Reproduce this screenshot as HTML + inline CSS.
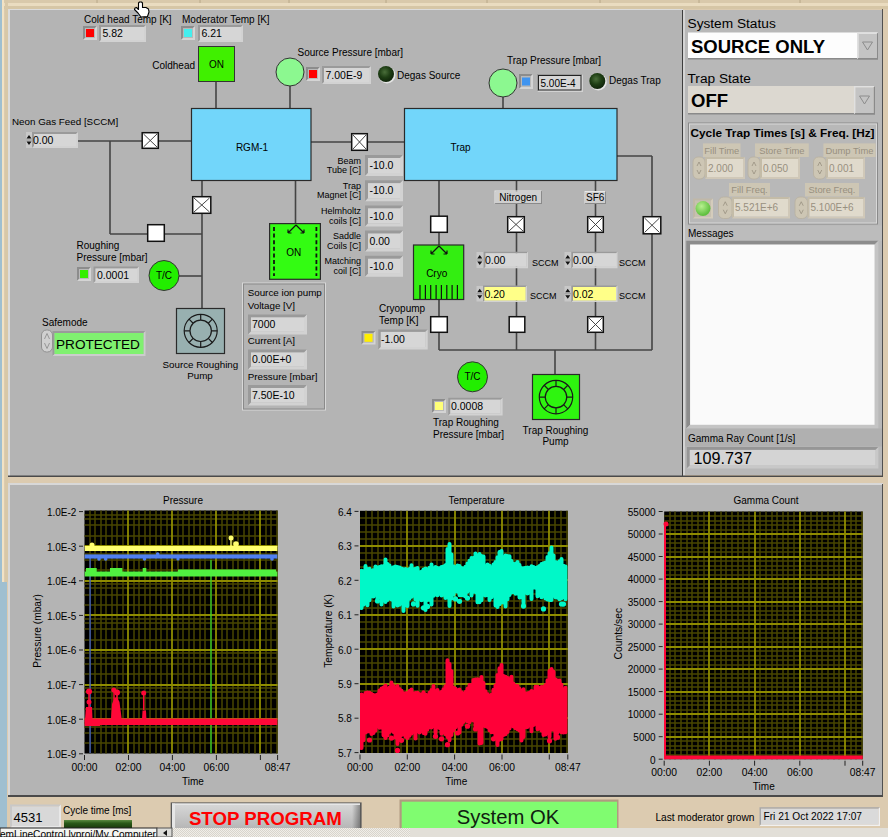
<!DOCTYPE html><html><head><meta charset="utf-8"><style>html,body{margin:0;padding:0;width:888px;height:837px;overflow:hidden;background:#dccbb0}</style></head><body><svg width="888" height="837" viewBox="0 0 888 837" font-family='"Liberation Sans", sans-serif' style="position:absolute;left:0;top:0">
<defs><radialGradient id="dl" cx="0.42" cy="0.38" r="0.62"><stop offset="0" stop-color="#4a6e3a"/><stop offset="0.55" stop-color="#1e3e14"/><stop offset="1" stop-color="#10240a"/></radialGradient></defs>
<rect x="0.0" y="0.0" width="888.0" height="837.0" fill="#dccbb0" />
<rect x="0.0" y="0.0" width="888.0" height="3.0" fill="#d9c9ab" />
<rect x="0.0" y="3.0" width="888.0" height="3.0" fill="#eadcc0" />
<rect x="0.0" y="6.0" width="888.0" height="3.0" fill="#d6c6a6" />
<line x1="97.0" y1="0.0" x2="97.0" y2="3.0" stroke="#b8a888" stroke-width="1"/>
<line x1="200.0" y1="0.0" x2="200.0" y2="3.0" stroke="#b8a888" stroke-width="1"/>
<line x1="289.0" y1="0.0" x2="289.0" y2="3.0" stroke="#b8a888" stroke-width="1"/>
<line x1="386.0" y1="0.0" x2="386.0" y2="3.0" stroke="#b8a888" stroke-width="1"/>
<line x1="487.0" y1="0.0" x2="487.0" y2="3.0" stroke="#b8a888" stroke-width="1"/>
<line x1="600.0" y1="0.0" x2="600.0" y2="3.0" stroke="#b8a888" stroke-width="1"/>
<line x1="699.0" y1="0.0" x2="699.0" y2="3.0" stroke="#b8a888" stroke-width="1"/>
<line x1="800.0" y1="0.0" x2="800.0" y2="3.0" stroke="#b8a888" stroke-width="1"/>
<rect x="0.0" y="0.0" width="2.0" height="582.0" fill="#9fbfd0" />
<rect x="0.0" y="582.0" width="7.0" height="246.0" fill="#9fbfd0" />
<rect x="2.0" y="0.0" width="2.0" height="582.0" fill="#f2e2c4" />
<rect x="5.0" y="0.0" width="3.0" height="582.0" fill="#d8c8a8" />
<rect x="8.0" y="9.0" width="675.0" height="1.0" fill="#dcdcdc" />
<rect x="8.0" y="9.0" width="2.0" height="467.0" fill="#dcdcdc" />
<rect x="10.0" y="10.0" width="672.0" height="466.0" fill="#b4b4b4" />
<rect x="682.0" y="10.0" width="1.0" height="466.0" fill="#3e3e3e" />
<rect x="683.0" y="10.0" width="2.0" height="466.0" fill="#d4d4d4" />
<rect x="685.0" y="10.0" width="197.0" height="465.0" fill="#b8b8b8" />
<rect x="882.0" y="9.0" width="1.0" height="468.0" fill="#505050" />
<rect x="8.0" y="475.5" width="875.0" height="1.5" fill="#4a4a4a" />
<rect x="8.0" y="483.0" width="875.0" height="2.0" fill="#d8d8d8" />
<rect x="8.0" y="483.0" width="2.0" height="314.0" fill="#d8d8d8" />
<rect x="10.0" y="485.0" width="872.0" height="310.0" fill="#b4b4b4" />
<rect x="882.0" y="484.0" width="1.0" height="313.0" fill="#505050" />
<rect x="8.0" y="795.0" width="875.0" height="2.0" fill="#4a4a4a" />
<text x="84.0" y="22.6" font-size="10" text-anchor="start" font-weight="400" fill="#000" >Cold head Temp [K]</text>
<polygon points="83,26 97,26 95,28 85,28 85,38 83,40" fill="#8c8c8c"/>
<polygon points="97,26 97,40 83,40 85,38 95,38 95,28" fill="#d4d4d4"/>
<rect x="85.0" y="28.0" width="10.0" height="10.0" fill="#b8b8b8" />
<rect x="86.0" y="29.0" width="8.0" height="8.0" fill="#ff0000" />
<polygon points="99,25 146,25 144,27 101,27 101,40 99,42" fill="#9a9a9a"/>
<polygon points="146,25 146,42 99,42 101,40 144,40 144,27" fill="#d2d2d2"/>
<rect x="101.0" y="27.0" width="43.0" height="13.0" fill="#d6d6d6" />
<text x="102.5" y="37.2" font-size="10.5" text-anchor="start" font-weight="400" fill="#000" >5.82</text>
<text x="182.0" y="22.6" font-size="10" text-anchor="start" font-weight="400" fill="#000" >Moderator Temp [K]</text>
<polygon points="181,26 195,26 193,28 183,28 183,38 181,40" fill="#8c8c8c"/>
<polygon points="195,26 195,40 181,40 183,38 193,38 193,28" fill="#d4d4d4"/>
<rect x="183.0" y="28.0" width="10.0" height="10.0" fill="#b8b8b8" />
<rect x="184.0" y="29.0" width="8.0" height="8.0" fill="#44eeee" />
<polygon points="198,25 243,25 241,27 200,27 200,40 198,42" fill="#9a9a9a"/>
<polygon points="243,25 243,42 198,42 200,40 241,40 241,27" fill="#d2d2d2"/>
<rect x="200.0" y="27.0" width="41.0" height="13.0" fill="#d6d6d6" />
<text x="201.5" y="37.2" font-size="10.5" text-anchor="start" font-weight="400" fill="#000" >6.21</text>
<text x="195.0" y="68.5" font-size="10" text-anchor="end" font-weight="400" fill="#000" >Coldhead</text>
<line x1="216.0" y1="82.0" x2="216.0" y2="108.0" stroke="#444444" stroke-width="1.6"/>
<line x1="290.0" y1="86.0" x2="290.0" y2="108.0" stroke="#444444" stroke-width="1.6"/>
<line x1="503.0" y1="97.0" x2="503.0" y2="108.0" stroke="#444444" stroke-width="1.6"/>
<line x1="78.0" y1="141.0" x2="191.0" y2="141.0" stroke="#444444" stroke-width="1.6"/>
<line x1="110.0" y1="141.0" x2="110.0" y2="234.0" stroke="#444444" stroke-width="1.6"/>
<line x1="110.0" y1="234.0" x2="202.0" y2="234.0" stroke="#444444" stroke-width="1.6"/>
<line x1="202.0" y1="181.0" x2="202.0" y2="308.0" stroke="#444444" stroke-width="1.6"/>
<line x1="179.0" y1="276.0" x2="202.0" y2="276.0" stroke="#444444" stroke-width="1.6"/>
<line x1="295.5" y1="181.0" x2="295.5" y2="224.0" stroke="#444444" stroke-width="1.6"/>
<line x1="311.0" y1="142.0" x2="404.5" y2="142.0" stroke="#444444" stroke-width="1.6"/>
<line x1="439.0" y1="181.0" x2="439.0" y2="350.0" stroke="#444444" stroke-width="1.6"/>
<line x1="516.5" y1="181.0" x2="516.5" y2="350.0" stroke="#444444" stroke-width="1.6"/>
<line x1="595.5" y1="181.0" x2="595.5" y2="350.0" stroke="#444444" stroke-width="1.6"/>
<line x1="617.0" y1="156.0" x2="652.0" y2="156.0" stroke="#444444" stroke-width="1.6"/>
<line x1="652.0" y1="156.0" x2="652.0" y2="350.0" stroke="#444444" stroke-width="1.6"/>
<line x1="439.0" y1="350.0" x2="652.0" y2="350.0" stroke="#444444" stroke-width="1.6"/>
<line x1="555.0" y1="350.0" x2="555.0" y2="374.0" stroke="#444444" stroke-width="1.6"/>
<rect x="198.5" y="46.5" width="36.0" height="35.0" fill="#40f000" stroke="#333" stroke-width="1" />
<text x="216.5" y="67.5" font-size="10" text-anchor="middle" font-weight="400" fill="#000" >ON</text>
<text x="297.5" y="55.5" font-size="10" text-anchor="start" font-weight="400" fill="#000" >Source Pressure [mbar]</text>
<circle cx="290" cy="72" r="14" fill="#8cf890" stroke="#333" stroke-width="1"/>
<polygon points="306,67 320,67 318,69 308,69 308,79 306,81" fill="#8c8c8c"/>
<polygon points="320,67 320,81 306,81 308,79 318,79 318,69" fill="#d4d4d4"/>
<rect x="308.0" y="69.0" width="10.0" height="10.0" fill="#b8b8b8" />
<rect x="309.0" y="70.0" width="8.0" height="8.0" fill="#ff0000" />
<polygon points="322,66 371,66 369,68 324,68 324,82 322,84" fill="#9a9a9a"/>
<polygon points="371,66 371,84 322,84 324,82 369,82 369,68" fill="#d2d2d2"/>
<rect x="324.0" y="68.0" width="45.0" height="14.0" fill="#d6d6d6" />
<text x="325.5" y="78.7" font-size="10.5" text-anchor="start" font-weight="400" fill="#000" >7.00E-9</text>
<circle cx="387" cy="75" r="8.5" fill="#e4e4e4"/>
<circle cx="386" cy="74" r="8" fill="url(#dl)"/>
<text x="397.0" y="78.5" font-size="10" text-anchor="start" font-weight="400" fill="#000" >Degas Source</text>
<rect x="191.5" y="108.5" width="119.5" height="72.0" fill="#72d6fa" stroke="#2a2a2a" stroke-width="1.2" />
<text x="252.0" y="150.6" font-size="10" text-anchor="middle" font-weight="400" fill="#000" >RGM-1</text>
<rect x="404.5" y="108.5" width="212.5" height="72.0" fill="#72d6fa" stroke="#2a2a2a" stroke-width="1.2" />
<text x="460.5" y="150.6" font-size="10" text-anchor="middle" font-weight="400" fill="#000" >Trap</text>
<text x="507.0" y="63.5" font-size="10" text-anchor="start" font-weight="400" fill="#000" >Trap Pressure [mbar]</text>
<circle cx="503" cy="83" r="14" fill="#8cf890" stroke="#333" stroke-width="1"/>
<polygon points="519,74 533,74 531,76 521,76 521,87 519,89" fill="#8c8c8c"/>
<polygon points="533,74 533,89 519,89 521,87 531,87 531,76" fill="#d4d4d4"/>
<rect x="521.0" y="76.0" width="10.0" height="11.0" fill="#b8b8b8" />
<rect x="522.0" y="77.5" width="8.0" height="8.0" fill="#3f94f0" />
<polygon points="537,74 583,74 581,76 539,76 539,90 537,92" fill="#9a9a9a"/>
<polygon points="583,74 583,92 537,92 539,90 581,90 581,76" fill="#d2d2d2"/>
<rect x="539.0" y="76.0" width="42.0" height="14.0" fill="#d6d6d6" />
<text x="540.5" y="86.5" font-size="10" text-anchor="start" font-weight="400" fill="#000" >5.00E-4</text>
<rect x="538.5" y="75.5" width="42.5" height="14.5" fill="none" stroke="#222" stroke-width="1" />
<circle cx="598.3" cy="82" r="8.5" fill="#e4e4e4"/>
<circle cx="597.3" cy="81" r="8" fill="url(#dl)"/>
<text x="609.0" y="83.5" font-size="10" text-anchor="start" font-weight="400" fill="#000" >Degas Trap</text>
<text x="12.0" y="124.5" font-size="9.8" text-anchor="start" font-weight="400" fill="#000" >Neon Gas Feed [SCCM]</text>
<rect x="26.0" y="132.0" width="6.0" height="16.0" fill="#c8c8c8" />
<path d="M26.5,138.5 L29.0,135.0 L31.5,138.5 Z M26.5,141.5 L29.0,145.0 L31.5,141.5 Z" fill="#111"/>
<line x1="26.0" y1="140.0" x2="32.0" y2="140.0" stroke="#888" stroke-width="0.8"/>
<polygon points="32,132 78,132 76,134 34,134 34,146 32,148" fill="#9a9a9a"/>
<polygon points="78,132 78,148 32,148 34,146 76,146 76,134" fill="#d2d2d2"/>
<rect x="34.0" y="134.0" width="42.0" height="12.0" fill="#d6d6d6" />
<text x="33.0" y="143.7" font-size="10.5" text-anchor="start" font-weight="400" fill="#000" >0.00</text>
<rect x="142.2" y="132.7" width="16.1" height="15.6" fill="#ffffff" stroke="#111" stroke-width="1.5" />
<path d="M143.5,134 L157,147 M157,134 L143.5,147" stroke="#333" stroke-width="0.9"/>
<rect x="192.7" y="196.7" width="18.1" height="16.6" fill="#ffffff" stroke="#111" stroke-width="1.5" />
<path d="M194,198 L209.5,212 M209.5,198 L194,212" stroke="#333" stroke-width="0.9"/>
<rect x="147.7" y="224.7" width="16.6" height="16.6" fill="#ffffff" stroke="#111" stroke-width="1.5" />
<circle cx="164" cy="275.5" r="15" fill="#22ee00" stroke="#333" stroke-width="1"/>
<text x="164.0" y="279.1" font-size="10" text-anchor="middle" font-weight="400" fill="#000" >T/C</text>
<text x="76.5" y="248.6" font-size="10" text-anchor="start" font-weight="400" fill="#000" >Roughing</text>
<text x="76.5" y="260.6" font-size="10" text-anchor="start" font-weight="400" fill="#000" >Pressure [mbar]</text>
<polygon points="77,267 91,267 89,269 79,269 79,279 77,281" fill="#8c8c8c"/>
<polygon points="91,267 91,281 77,281 79,279 89,279 89,269" fill="#d4d4d4"/>
<rect x="79.0" y="269.0" width="10.0" height="10.0" fill="#b8b8b8" />
<rect x="80.0" y="270.0" width="8.0" height="8.0" fill="#33ee00" />
<polygon points="93.5,266.5 139,266.5 137,268.5 95.5,268.5 95.5,281 93.5,283" fill="#9a9a9a"/>
<polygon points="139,266.5 139,283 93.5,283 95.5,281 137,281 137,268.5" fill="#d2d2d2"/>
<rect x="95.5" y="268.5" width="41.5" height="12.5" fill="#d6d6d6" />
<text x="97.0" y="278.5" font-size="10.5" text-anchor="start" font-weight="400" fill="#000" >0.0001</text>
<text x="42.0" y="325.6" font-size="10" text-anchor="start" font-weight="400" fill="#000" >Safemode</text>
<rect x="41.5" y="330" width="11" height="22" rx="5" fill="#d0d0d0" stroke="#909090" stroke-width="1"/>
<path d="M44.5,339 L47,333.5 L49.5,339 M44.5,343 L47,348.5 L49.5,343" stroke="#888" stroke-width="0.8" fill="none"/>
<polygon points="52.5,331 145.5,331 143.5,333 54.5,333 54.5,354 52.5,356" fill="#9a9a9a"/>
<polygon points="145.5,331 145.5,356 52.5,356 54.5,354 143.5,354 143.5,333" fill="#cccccc"/>
<rect x="54.5" y="333.0" width="89.0" height="21.0" fill="#80f070" />
<text x="56.0" y="349.3" font-size="13.6" text-anchor="start" font-weight="400" fill="#000" >PROTECTED</text>
<rect x="176.5" y="308.5" width="48.0" height="45.0" fill="#98b0b0" stroke="#2a2a2a" stroke-width="1.2" />
<circle cx="200.7" cy="330.8" r="16.5" fill="none" stroke="#1a1a1a" stroke-width="1.2"/>
<circle cx="200.7" cy="330.8" r="10.7" fill="none" stroke="#1a1a1a" stroke-width="1.2"/>
<path d="M211.40,330.80 L217.20,330.80 M208.27,338.37 L212.37,342.47 M200.70,341.50 L200.70,347.30 M193.13,338.37 L189.03,342.47 M190.00,330.80 L184.20,330.80 M193.13,323.23 L189.03,319.13 M200.70,320.10 L200.70,314.30 M208.27,323.23 L212.37,319.13 " stroke="#1a1a1a" stroke-width="1.2"/>
<text x="200.4" y="367.8" font-size="9.8" text-anchor="middle" font-weight="400" fill="#000" >Source Roughing</text>
<text x="200.0" y="379.3" font-size="9.8" text-anchor="middle" font-weight="400" fill="#000" >Pump</text>
<rect x="351.7" y="133.7" width="15.6" height="16.6" fill="#ffffff" stroke="#111" stroke-width="1.5" />
<path d="M353,135 L366,149 M366,135 L353,149" stroke="#333" stroke-width="0.9"/>
<text x="361.0" y="163.6" font-size="9" text-anchor="end" font-weight="400" fill="#000" >Beam</text>
<text x="361.0" y="173.2" font-size="9" text-anchor="end" font-weight="400" fill="#000" >Tube [C]</text>
<polygon points="365,155.0 403,155.0 400,158.0 368,158.0 368,173.0 365,176.0" fill="#9a9a9a"/>
<polygon points="403,155.0 403,176.0 365,176.0 368,173.0 400,173.0 400,158.0" fill="#d2d2d2"/>
<rect x="368.0" y="158.0" width="32.0" height="15.0" fill="#d6d6d6" />
<text x="369.5" y="169.2" font-size="10.5" text-anchor="start" font-weight="400" fill="#000" >-10.0</text>
<text x="361.0" y="188.8" font-size="9" text-anchor="end" font-weight="400" fill="#000" >Trap</text>
<text x="361.0" y="198.4" font-size="9" text-anchor="end" font-weight="400" fill="#000" >Magnet [C]</text>
<polygon points="365,180.2 403,180.2 400,183.2 368,183.2 368,198.2 365,201.2" fill="#9a9a9a"/>
<polygon points="403,180.2 403,201.2 365,201.2 368,198.2 400,198.2 400,183.2" fill="#d2d2d2"/>
<rect x="368.0" y="183.2" width="32.0" height="15.0" fill="#d6d6d6" />
<text x="369.5" y="194.4" font-size="10.5" text-anchor="start" font-weight="400" fill="#000" >-10.0</text>
<text x="361.0" y="214.0" font-size="9" text-anchor="end" font-weight="400" fill="#000" >Helmholtz</text>
<text x="361.0" y="223.6" font-size="9" text-anchor="end" font-weight="400" fill="#000" >coils [C]</text>
<polygon points="365,205.4 403,205.4 400,208.4 368,208.4 368,223.4 365,226.4" fill="#9a9a9a"/>
<polygon points="403,205.4 403,226.4 365,226.4 368,223.4 400,223.4 400,208.4" fill="#d2d2d2"/>
<rect x="368.0" y="208.4" width="32.0" height="15.0" fill="#d6d6d6" />
<text x="369.5" y="219.6" font-size="10.5" text-anchor="start" font-weight="400" fill="#000" >-10.0</text>
<text x="361.0" y="239.2" font-size="9" text-anchor="end" font-weight="400" fill="#000" >Saddle</text>
<text x="361.0" y="248.8" font-size="9" text-anchor="end" font-weight="400" fill="#000" >Coils [C]</text>
<polygon points="365,230.6 403,230.6 400,233.6 368,233.6 368,248.6 365,251.6" fill="#9a9a9a"/>
<polygon points="403,230.6 403,251.6 365,251.6 368,248.6 400,248.6 400,233.6" fill="#d2d2d2"/>
<rect x="368.0" y="233.6" width="32.0" height="15.0" fill="#d6d6d6" />
<text x="369.5" y="244.8" font-size="10.5" text-anchor="start" font-weight="400" fill="#000" >0.00</text>
<text x="361.0" y="264.4" font-size="9" text-anchor="end" font-weight="400" fill="#000" >Matching</text>
<text x="361.0" y="274.0" font-size="9" text-anchor="end" font-weight="400" fill="#000" >coil [C]</text>
<polygon points="365,255.8 403,255.8 400,258.8 368,258.8 368,273.8 365,276.8" fill="#9a9a9a"/>
<polygon points="403,255.8 403,276.8 365,276.8 368,273.8 400,273.8 400,258.8" fill="#d2d2d2"/>
<rect x="368.0" y="258.8" width="32.0" height="15.0" fill="#d6d6d6" />
<text x="369.5" y="270.0" font-size="10.5" text-anchor="start" font-weight="400" fill="#000" >-10.0</text>
<rect x="269.6" y="223.6" width="50.8" height="55.7" fill="#33fc12" stroke="#2a2a2a" stroke-width="1.2" />
<path d="M274,227 L274,276 M316.4,227 L316.4,276" stroke="#111" stroke-width="1.8" stroke-dasharray="4,2.6"/>
<path d="M296,225 L288,233 M296,225 L304,233 M288,233 L288,229.5 M288,233 L291.5,233 M304,233 L304,229.5 M304,233 L300.5,233" stroke="#111" stroke-width="1.2" fill="none"/>
<text x="293.7" y="255.6" font-size="10" text-anchor="middle" font-weight="400" fill="#000" >ON</text>
<rect x="242.5" y="283" width="83" height="127" fill="none" stroke="#d8d8d8" stroke-width="1"/>
<rect x="243.5" y="284" width="81" height="125" fill="none" stroke="#8a8a8a" stroke-width="1"/>
<text x="247.7" y="295.5" font-size="9.8" text-anchor="start" font-weight="400" fill="#000" >Source ion pump</text>
<text x="247.7" y="308.5" font-size="9.8" text-anchor="start" font-weight="400" fill="#000" >Voltage [V]</text>
<polygon points="248,314.4 307,314.4 304,317.4 251,317.4 251,331.6 248,334.6" fill="#9a9a9a"/>
<polygon points="307,314.4 307,334.6 248,334.6 251,331.6 304,331.6 304,317.4" fill="#d2d2d2"/>
<rect x="251.0" y="317.4" width="53.0" height="14.2" fill="#d6d6d6" />
<text x="252.0" y="328.2" font-size="10.5" text-anchor="start" font-weight="400" fill="#000" >7000</text>
<text x="247.7" y="344.0" font-size="9.8" text-anchor="start" font-weight="400" fill="#000" >Current [A]</text>
<polygon points="248,349.5 307,349.5 304,352.5 251,352.5 251,366.5 248,369.5" fill="#9a9a9a"/>
<polygon points="307,349.5 307,369.5 248,369.5 251,366.5 304,366.5 304,352.5" fill="#d2d2d2"/>
<rect x="251.0" y="352.5" width="53.0" height="14.0" fill="#d6d6d6" />
<text x="252.0" y="363.2" font-size="10.5" text-anchor="start" font-weight="400" fill="#000" >0.00E+0</text>
<text x="247.7" y="379.5" font-size="9.8" text-anchor="start" font-weight="400" fill="#000" >Pressure [mbar]</text>
<polygon points="248,385 307,385 304,388 251,388 251,402.5 248,405.5" fill="#9a9a9a"/>
<polygon points="307,385 307,405.5 248,405.5 251,402.5 304,402.5 304,388" fill="#d2d2d2"/>
<rect x="251.0" y="388.0" width="53.0" height="14.5" fill="#d6d6d6" />
<text x="252.0" y="399.0" font-size="10.5" text-anchor="start" font-weight="400" fill="#000" >7.50E-10</text>
<polygon points="494.5,190.5 542,190.5 541,191.5 495.5,191.5 495.5,203 494.5,204" fill="#e8e8e8"/>
<polygon points="542,190.5 542,204 494.5,204 495.5,203 541,203 541,191.5" fill="#8a8a8a"/>
<rect x="495.5" y="191.5" width="45.5" height="11.5" fill="#cfcfcf" />
<text x="518.2" y="200.8" font-size="10" text-anchor="middle" font-weight="400" fill="#000" >Nitrogen</text>
<polygon points="584.5,191 606,191 605,192 585.5,192 585.5,203 584.5,204" fill="#e8e8e8"/>
<polygon points="606,191 606,204 584.5,204 585.5,203 605,203 605,192" fill="#8a8a8a"/>
<rect x="585.5" y="192.0" width="19.5" height="11.0" fill="#cfcfcf" />
<text x="595.2" y="201.1" font-size="10" text-anchor="middle" font-weight="400" fill="#000" >SF6</text>
<rect x="430.7" y="216.2" width="16.6" height="16.1" fill="#ffffff" stroke="#111" stroke-width="1.5" />
<rect x="413.5" y="245.0" width="50.2" height="54.5" fill="#33ee11" stroke="#2a2a2a" stroke-width="1.2" />
<path d="M439,246 L431,254 M439,246 L447,254 M431,254 L431,250.5 M431,254 L434.5,254 M447,254 L447,250.5 M447,254 L443.5,254" stroke="#111" stroke-width="1.2" fill="none"/>
<text x="436.7" y="276.9" font-size="10" text-anchor="middle" font-weight="400" fill="#000" >Cryo</text>
<path d="M420.0,285 L420.0,299 M425.4,285 L425.4,299 M430.7,285 L430.7,299 M436.1,285 L436.1,299 M441.4,285 L441.4,299 M446.8,285 L446.8,299 M452.1,285 L452.1,299 M457.4,285 L457.4,299 " stroke="#111" stroke-width="1.2"/>
<rect x="430.7" y="316.7" width="16.6" height="15.6" fill="#ffffff" stroke="#111" stroke-width="1.5" />
<rect x="507.7" y="216.7" width="16.6" height="15.6" fill="#ffffff" stroke="#111" stroke-width="1.5" />
<path d="M509,218 L523,231 M523,218 L509,231" stroke="#333" stroke-width="0.9"/>
<rect x="476.5" y="252.0" width="6.5" height="16.0" fill="#c8c8c8" />
<path d="M477.25,258.5 L479.75,255.0 L482.25,258.5 Z M477.25,261.5 L479.75,265.0 L482.25,261.5 Z" fill="#111"/>
<line x1="476.5" y1="260.0" x2="483.0" y2="260.0" stroke="#888" stroke-width="0.8"/>
<polygon points="484,251.7 528,251.7 526.5,253.2 485.5,253.2 485.5,266.8 484,268.3" fill="#9a9a9a"/>
<polygon points="528,251.7 528,268.3 484,268.3 485.5,266.8 526.5,266.8 526.5,253.2" fill="#d2d2d2"/>
<rect x="485.5" y="253.2" width="41.0" height="13.6" fill="#d6d6d6" />
<text x="485.0" y="263.7" font-size="10.5" text-anchor="start" font-weight="400" fill="#000" >0.00</text>
<text x="532.0" y="265.8" font-size="9" text-anchor="start" font-weight="400" fill="#000" >SCCM</text>
<rect x="476.5" y="286.0" width="6.5" height="15.5" fill="#c8c8c8" />
<path d="M477.25,292.25 L479.75,288.75 L482.25,292.25 Z M477.25,295.25 L479.75,298.75 L482.25,295.25 Z" fill="#111"/>
<line x1="476.5" y1="293.8" x2="483.0" y2="293.8" stroke="#888" stroke-width="0.8"/>
<polygon points="483,285.5 527,285.5 525.5,287.0 484.5,287.0 484.5,300.5 483,302" fill="#9a9a9a"/>
<polygon points="527,285.5 527,302 483,302 484.5,300.5 525.5,300.5 525.5,287.0" fill="#d2d2d2"/>
<rect x="484.5" y="287.0" width="41.0" height="13.5" fill="#ffff88" />
<text x="484.5" y="297.5" font-size="10.5" text-anchor="start" font-weight="400" fill="#000" >0.20</text>
<text x="530.0" y="298.9" font-size="9" text-anchor="start" font-weight="400" fill="#000" >SCCM</text>
<rect x="509.2" y="316.7" width="15.6" height="15.6" fill="#ffffff" stroke="#111" stroke-width="1.5" />
<rect x="587.7" y="216.7" width="15.6" height="15.6" fill="#ffffff" stroke="#111" stroke-width="1.5" />
<path d="M589,218 L602,231 M602,218 L589,231" stroke="#333" stroke-width="0.9"/>
<rect x="564.5" y="252.0" width="6.5" height="16.0" fill="#c8c8c8" />
<path d="M565.25,258.5 L567.75,255.0 L570.25,258.5 Z M565.25,261.5 L567.75,265.0 L570.25,261.5 Z" fill="#111"/>
<line x1="564.5" y1="260.0" x2="571.0" y2="260.0" stroke="#888" stroke-width="0.8"/>
<polygon points="571.5,251.7 617.5,251.7 616.0,253.2 573.0,253.2 573.0,266.8 571.5,268.3" fill="#9a9a9a"/>
<polygon points="617.5,251.7 617.5,268.3 571.5,268.3 573.0,266.8 616.0,266.8 616.0,253.2" fill="#d2d2d2"/>
<rect x="573.0" y="253.2" width="43.0" height="13.6" fill="#d6d6d6" />
<text x="573.0" y="263.7" font-size="10.5" text-anchor="start" font-weight="400" fill="#000" >0.00</text>
<text x="619.0" y="265.8" font-size="9" text-anchor="start" font-weight="400" fill="#000" >SCCM</text>
<rect x="564.5" y="286.0" width="6.5" height="15.5" fill="#c8c8c8" />
<path d="M565.25,292.25 L567.75,288.75 L570.25,292.25 Z M565.25,295.25 L567.75,298.75 L570.25,295.25 Z" fill="#111"/>
<line x1="564.5" y1="293.8" x2="571.0" y2="293.8" stroke="#888" stroke-width="0.8"/>
<polygon points="571.5,285.5 617.5,285.5 616.0,287.0 573.0,287.0 573.0,300.5 571.5,302" fill="#9a9a9a"/>
<polygon points="617.5,285.5 617.5,302 571.5,302 573.0,300.5 616.0,300.5 616.0,287.0" fill="#d2d2d2"/>
<rect x="573.0" y="287.0" width="43.0" height="13.5" fill="#ffff88" />
<text x="573.0" y="297.5" font-size="10.5" text-anchor="start" font-weight="400" fill="#000" >0.02</text>
<text x="619.0" y="298.9" font-size="9" text-anchor="start" font-weight="400" fill="#000" >SCCM</text>
<rect x="587.7" y="316.7" width="15.6" height="15.6" fill="#ffffff" stroke="#111" stroke-width="1.5" />
<path d="M589,318 L602,331 M602,318 L589,331" stroke="#333" stroke-width="0.9"/>
<rect x="643.2" y="216.7" width="17.6" height="17.1" fill="#ffffff" stroke="#111" stroke-width="1.5" />
<path d="M644.5,218 L659.5,232.5 M659.5,218 L644.5,232.5" stroke="#333" stroke-width="0.9"/>
<text x="379.0" y="312.4" font-size="10" text-anchor="start" font-weight="400" fill="#000" >Cryopump</text>
<text x="379.0" y="324.4" font-size="10" text-anchor="start" font-weight="400" fill="#000" >Temp [K]</text>
<polygon points="361.5,331 375.5,331 373.5,333 363.5,333 363.5,342.5 361.5,344.5" fill="#8c8c8c"/>
<polygon points="375.5,331 375.5,344.5 361.5,344.5 363.5,342.5 373.5,342.5 373.5,333" fill="#d4d4d4"/>
<rect x="363.5" y="333.0" width="10.0" height="9.5" fill="#b8b8b8" />
<rect x="364.5" y="333.8" width="8.0" height="8.0" fill="#ffee00" />
<polygon points="378.3,329.4 427.7,329.4 425.2,331.9 380.8,331.9 380.8,347.0 378.3,349.5" fill="#9a9a9a"/>
<polygon points="427.7,329.4 427.7,349.5 378.3,349.5 380.8,347.0 425.2,347.0 425.2,331.9" fill="#d2d2d2"/>
<rect x="380.8" y="331.9" width="44.4" height="15.1" fill="#d6d6d6" />
<text x="381.0" y="343.2" font-size="10.5" text-anchor="start" font-weight="400" fill="#000" >-1.00</text>
<circle cx="472.5" cy="376.8" r="15" fill="#22ee00" stroke="#333" stroke-width="1"/>
<text x="472.5" y="380.4" font-size="10" text-anchor="middle" font-weight="400" fill="#000" >T/C</text>
<polygon points="432,399 446,399 444,401 434,401 434,411 432,413" fill="#8c8c8c"/>
<polygon points="446,399 446,413 432,413 434,411 444,411 444,401" fill="#d4d4d4"/>
<rect x="434.0" y="401.0" width="10.0" height="10.0" fill="#b8b8b8" />
<rect x="435.0" y="402.0" width="8.0" height="8.0" fill="#ffff77" />
<polygon points="448.3,397.7 502.6,397.7 500.6,399.7 450.3,399.7 450.3,413.5 448.3,415.5" fill="#9a9a9a"/>
<polygon points="502.6,397.7 502.6,415.5 448.3,415.5 450.3,413.5 500.6,413.5 500.6,399.7" fill="#d2d2d2"/>
<rect x="450.3" y="399.7" width="50.3" height="13.8" fill="#d6d6d6" />
<text x="451.0" y="410.3" font-size="10.5" text-anchor="start" font-weight="400" fill="#000" >0.0008</text>
<text x="433.0" y="425.6" font-size="10" text-anchor="start" font-weight="400" fill="#000" >Trap Roughing</text>
<text x="433.0" y="438.2" font-size="10" text-anchor="start" font-weight="400" fill="#000" >Pressure [mbar]</text>
<rect x="532.5" y="374.5" width="47.0" height="45.0" fill="#2ef50f" stroke="#2a2a2a" stroke-width="1.2" />
<circle cx="556" cy="397.1" r="16.7" fill="none" stroke="#1a1a1a" stroke-width="1.2"/>
<circle cx="556" cy="397.1" r="10.75" fill="none" stroke="#1a1a1a" stroke-width="1.2"/>
<path d="M566.75,397.10 L572.70,397.10 M563.60,404.70 L567.81,408.91 M556.00,407.85 L556.00,413.80 M548.40,404.70 L544.19,408.91 M545.25,397.10 L539.30,397.10 M548.40,389.50 L544.19,385.29 M556.00,386.35 L556.00,380.40 M563.60,389.50 L567.81,385.29 " stroke="#1a1a1a" stroke-width="1.2"/>
<text x="555.5" y="433.6" font-size="10" text-anchor="middle" font-weight="400" fill="#000" >Trap Roughing</text>
<text x="555.5" y="445.2" font-size="10" text-anchor="middle" font-weight="400" fill="#000" >Pump</text>
<text x="687.5" y="27.9" font-size="13.7" text-anchor="start" font-weight="400" fill="#000" >System Status</text>
<rect x="688.0" y="32.5" width="190.0" height="26.5" fill="#fdfdfd" />
<rect x="688.0" y="58.0" width="190.0" height="1.5" fill="#8a8a8a" />
<polygon points="857,32.5 878,32.5 876.5,34.0 858.5,34.0 858.5,58.0 857,59.5" fill="#e0e0e0"/>
<polygon points="878,32.5 878,59.5 857,59.5 858.5,58.0 876.5,58.0 876.5,34.0" fill="#8a8a8a"/>
<rect x="858.5" y="34.0" width="18.0" height="24.0" fill="#c4c4c4" />
<path d="M862.5,42 L872.5,42 L867.5,50 Z" fill="none" stroke="#8c8c8c" stroke-width="1"/>
<text x="691.0" y="52.6" font-size="18.5" text-anchor="start" font-weight="700" fill="#000" >SOURCE ONLY</text>
<text x="687.5" y="82.9" font-size="13.7" text-anchor="start" font-weight="400" fill="#000" >Trap State</text>
<rect x="688.0" y="86.0" width="187.0" height="28.0" fill="#dcd8d0" />
<rect x="688.0" y="113.0" width="187.0" height="1.5" fill="#8a8a8a" />
<polygon points="854,86 875,86 873.5,87.5 855.5,87.5 855.5,113.0 854,114.5" fill="#e0e0e0"/>
<polygon points="875,86 875,114.5 854,114.5 855.5,113.0 873.5,113.0 873.5,87.5" fill="#8a8a8a"/>
<rect x="855.5" y="87.5" width="18.0" height="25.5" fill="#c4c4c4" />
<path d="M859.5,96 L869.5,96 L864.5,104 Z" fill="none" stroke="#8c8c8c" stroke-width="1"/>
<text x="691.0" y="106.6" font-size="18.5" text-anchor="start" font-weight="700" fill="#000" >OFF</text>
<rect x="688.5" y="123" width="189" height="101" fill="none" stroke="#8a8a8a" stroke-width="1"/>
<rect x="689.5" y="124" width="187" height="99" fill="none" stroke="#d8d8d8" stroke-width="1"/>
<text x="690.5" y="137.2" font-size="11.8" text-anchor="start" font-weight="700" fill="#000" >Cycle Trap Times [s] &amp; Freq. [Hz]</text>
<rect x="703.0" y="143.4" width="37.5" height="13.6" fill="#cdc6b4" />
<text x="721.8" y="153.5" font-size="9.4" text-anchor="middle" font-weight="400" fill="#989080" >Fill Time</text>
<rect x="755.0" y="143.4" width="53.8" height="13.6" fill="#cdc6b4" />
<text x="781.9" y="153.5" font-size="9.4" text-anchor="middle" font-weight="400" fill="#989080" >Store Time</text>
<rect x="823.4" y="143.4" width="52.2" height="13.6" fill="#cdc6b4" />
<text x="849.5" y="153.5" font-size="9.4" text-anchor="middle" font-weight="400" fill="#989080" >Dump Time</text>
<rect x="693" y="157" width="12" height="22" rx="5" fill="#cdc6b4" stroke="#b8b0a0" stroke-width="0.8"/>
<path d="M697.0,166.0 L699.0,162.0 L701.0,166.0 M697.0,170.0 L699.0,174.0 L701.0,170.0" stroke="#989080" stroke-width="0.8" fill="none"/>
<polygon points="705,157 745,157 743,159 707,159 707,177 705,179" fill="#c4bca8"/>
<polygon points="745,157 745,179 705,179 707,177 743,177 743,159" fill="#d0c8b8"/>
<rect x="707.0" y="159.0" width="36.0" height="18.0" fill="#e0dacc" />
<text x="708.0" y="171.6" font-size="10" text-anchor="start" font-weight="400" fill="#989080" >2.000</text>
<rect x="748" y="157" width="12" height="22" rx="5" fill="#cdc6b4" stroke="#b8b0a0" stroke-width="0.8"/>
<path d="M752.0,166.0 L754.0,162.0 L756.0,166.0 M752.0,170.0 L754.0,174.0 L756.0,170.0" stroke="#989080" stroke-width="0.8" fill="none"/>
<polygon points="760,157 800,157 798,159 762,159 762,177 760,179" fill="#c4bca8"/>
<polygon points="800,157 800,179 760,179 762,177 798,177 798,159" fill="#d0c8b8"/>
<rect x="762.0" y="159.0" width="36.0" height="18.0" fill="#e0dacc" />
<text x="763.0" y="171.6" font-size="10" text-anchor="start" font-weight="400" fill="#989080" >0.050</text>
<rect x="813.5" y="157" width="12.5" height="22" rx="5" fill="#cdc6b4" stroke="#b8b0a0" stroke-width="0.8"/>
<path d="M817.75,166.0 L819.75,162.0 L821.75,166.0 M817.75,170.0 L819.75,174.0 L821.75,170.0" stroke="#989080" stroke-width="0.8" fill="none"/>
<polygon points="826,157 865,157 863,159 828,159 828,177 826,179" fill="#c4bca8"/>
<polygon points="865,157 865,179 826,179 828,177 863,177 863,159" fill="#d0c8b8"/>
<rect x="828.0" y="159.0" width="35.0" height="18.0" fill="#e0dacc" />
<text x="829.0" y="171.6" font-size="10" text-anchor="start" font-weight="400" fill="#989080" >0.001</text>
<rect x="729.0" y="183.0" width="41.0" height="13.5" fill="#cdc6b4" />
<text x="749.5" y="193.1" font-size="9.4" text-anchor="middle" font-weight="400" fill="#989080" >Fill Freq.</text>
<rect x="805.0" y="183.0" width="54.0" height="13.5" fill="#cdc6b4" />
<text x="832.0" y="193.1" font-size="9.4" text-anchor="middle" font-weight="400" fill="#989080" >Store Freq.</text>
<rect x="718.5" y="197" width="13.5" height="21.5" rx="5" fill="#cdc6b4" stroke="#b8b0a0" stroke-width="0.8"/>
<path d="M723.25,205.75 L725.25,201.75 L727.25,205.75 M723.25,209.75 L725.25,213.75 L727.25,209.75" stroke="#989080" stroke-width="0.8" fill="none"/>
<polygon points="732,197 790,197 788,199 734,199 734,216.5 732,218.5" fill="#c4bca8"/>
<polygon points="790,197 790,218.5 732,218.5 734,216.5 788,216.5 788,199" fill="#d0c8b8"/>
<rect x="734.0" y="199.0" width="54.0" height="17.5" fill="#e0dacc" />
<text x="735.0" y="211.3" font-size="10" text-anchor="start" font-weight="400" fill="#989080" >5.521E+6</text>
<rect x="795" y="197" width="12.5" height="21.5" rx="5" fill="#cdc6b4" stroke="#b8b0a0" stroke-width="0.8"/>
<path d="M799.25,205.75 L801.25,201.75 L803.25,205.75 M799.25,209.75 L801.25,213.75 L803.25,209.75" stroke="#989080" stroke-width="0.8" fill="none"/>
<polygon points="807.5,197 865,197 863,199 809.5,199 809.5,216.5 807.5,218.5" fill="#c4bca8"/>
<polygon points="865,197 865,218.5 807.5,218.5 809.5,216.5 863,216.5 863,199" fill="#d0c8b8"/>
<rect x="809.5" y="199.0" width="53.5" height="17.5" fill="#e0dacc" />
<text x="810.5" y="211.3" font-size="10" text-anchor="start" font-weight="400" fill="#989080" >5.100E+6</text>
<polygon points="693,198.5 713,198.5 711,200.5 695,200.5 695,216.5 693,218.5" fill="#c0b8a8"/>
<polygon points="713,198.5 713,218.5 693,218.5 695,216.5 711,216.5 711,200.5" fill="#d4ccbc"/>
<rect x="695.0" y="200.5" width="16.0" height="16.0" fill="#c8c0b0" />
<radialGradient id="gl" cx="0.4" cy="0.35" r="0.6"><stop offset="0" stop-color="#b8f090"/><stop offset="1" stop-color="#60c040"/></radialGradient>
<circle cx="703" cy="208.5" r="7.5" fill="url(#gl)"/>
<rect x="685.0" y="225.5" width="197.0" height="15.5" fill="#bcbcbc" />
<text x="688.0" y="236.6" font-size="10" text-anchor="start" font-weight="400" fill="#000" >Messages</text>
<polygon points="686.3,240.8 878.4,240.8 874.6,244.60000000000002 690.0999999999999,244.60000000000002 690.0999999999999,424.8 686.3,428.6" fill="#8c8c8c"/>
<polygon points="878.4,240.8 878.4,428.6 686.3,428.6 690.0999999999999,424.8 874.6,424.8 874.6,244.60000000000002" fill="#c4c4c4"/>
<rect x="690.1" y="244.6" width="184.5" height="180.2" fill="#fafafa" />
<rect x="685.0" y="428.6" width="197.0" height="17.9" fill="#b0b0b0" />
<text x="688.0" y="442.1" font-size="10" text-anchor="start" font-weight="400" fill="#000" >Gamma Ray Count [1/s]</text>
<polygon points="686.8,446.9 878.4,446.9 875.4,449.9 689.8,449.9 689.8,465.4 686.8,468.4" fill="#969696"/>
<polygon points="878.4,446.9 878.4,468.4 686.8,468.4 689.8,465.4 875.4,465.4 875.4,449.9" fill="#c8c8c8"/>
<rect x="689.8" y="449.9" width="185.6" height="15.5" fill="#d4d4d4" />
<text x="693.5" y="463.8" font-size="16.2" text-anchor="start" font-weight="400" fill="#000" >109.737</text>
<text x="183.0" y="503.6" font-size="10" text-anchor="middle" font-weight="400" fill="#000" >Pressure</text>
<text transform="translate(41.3,631) rotate(-90)" font-size="10.2" text-anchor="middle">Pressure (mbar)</text>
<path d="M84.5,755.0 L84.5,760.0 M128.5,755.0 L128.5,760.0 M172.4,755.0 L172.4,760.0 M216.4,755.0 L216.4,760.0 M260.4,755.0 L260.4,760.0 M277.6,755.0 L277.6,760.0 " stroke="#222" stroke-width="1"/>
<text x="84.5" y="770.7" font-size="10.3" text-anchor="middle" font-weight="400" fill="#000" >00:00</text>
<text x="128.5" y="770.7" font-size="10.3" text-anchor="middle" font-weight="400" fill="#000" >02:00</text>
<text x="172.4" y="770.7" font-size="10.3" text-anchor="middle" font-weight="400" fill="#000" >04:00</text>
<text x="216.4" y="770.7" font-size="10.3" text-anchor="middle" font-weight="400" fill="#000" >06:00</text>
<text x="277.6" y="770.7" font-size="10.3" text-anchor="middle" font-weight="400" fill="#000" >08:47</text>
<text x="193.0" y="784.5" font-size="10" text-anchor="middle" font-weight="400" fill="#000" >Time</text>
<rect x="84.5" y="510.5" width="193.1" height="243.0" fill="#000" />
<path d="M90.0,510.5 L90.0,753.5 M95.0,510.5 L95.0,753.5 M101.0,510.5 L101.0,753.5 M106.0,510.5 L106.0,753.5 M112.0,510.5 L112.0,753.5 M117.0,510.5 L117.0,753.5 M123.0,510.5 L123.0,753.5 M134.0,510.5 L134.0,753.5 M139.0,510.5 L139.0,753.5 M145.0,510.5 L145.0,753.5 M150.0,510.5 L150.0,753.5 M156.0,510.5 L156.0,753.5 M161.0,510.5 L161.0,753.5 M167.0,510.5 L167.0,753.5 M178.0,510.5 L178.0,753.5 M183.0,510.5 L183.0,753.5 M189.0,510.5 L189.0,753.5 M194.0,510.5 L194.0,753.5 M200.0,510.5 L200.0,753.5 M205.0,510.5 L205.0,753.5 M211.0,510.5 L211.0,753.5 M222.0,510.5 L222.0,753.5 M227.0,510.5 L227.0,753.5 M233.0,510.5 L233.0,753.5 M238.0,510.5 L238.0,753.5 M244.0,510.5 L244.0,753.5 M249.0,510.5 L249.0,753.5 M255.0,510.5 L255.0,753.5 M266.0,510.5 L266.0,753.5 M271.0,510.5 L271.0,753.5 M277.0,510.5 L277.0,753.5 M84.5,536.0 L277.6,536.0 M84.5,525.0 L277.6,525.0 M84.5,519.0 L277.6,519.0 M84.5,515.0 L277.6,515.0 M84.5,570.0 L277.6,570.0 M84.5,560.0 L277.6,560.0 M84.5,554.0 L277.6,554.0 M84.5,550.0 L277.6,550.0 M84.5,605.0 L277.6,605.0 M84.5,595.0 L277.6,595.0 M84.5,588.0 L277.6,588.0 M84.5,584.0 L277.6,584.0 M84.5,640.0 L277.6,640.0 M84.5,629.0 L277.6,629.0 M84.5,623.0 L277.6,623.0 M84.5,619.0 L277.6,619.0 M84.5,674.0 L277.6,674.0 M84.5,664.0 L277.6,664.0 M84.5,658.0 L277.6,658.0 M84.5,653.0 L277.6,653.0 M84.5,709.0 L277.6,709.0 M84.5,698.0 L277.6,698.0 M84.5,692.0 L277.6,692.0 M84.5,688.0 L277.6,688.0 M84.5,743.0 L277.6,743.0 M84.5,733.0 L277.6,733.0 M84.5,727.0 L277.6,727.0 M84.5,723.0 L277.6,723.0 " stroke="#484600" stroke-width="1.5"/>
<path d="M128.0,510.5 L128.0,753.5 M172.0,510.5 L172.0,753.5 M216.0,510.5 L216.0,753.5 M260.0,510.5 L260.0,753.5 M84.5,546.0 L277.6,546.0 M84.5,581.0 L277.6,581.0 M84.5,615.0 L277.6,615.0 M84.5,650.0 L277.6,650.0 M84.5,685.0 L277.6,685.0 M84.5,719.0 L277.6,719.0 " stroke="#8e8c00" stroke-width="1.8"/>
<path d="M79.0,511.6 L83.0,511.6 M79.0,546.2 L83.0,546.2 M79.0,580.8 L83.0,580.8 M79.0,615.4 L83.0,615.4 M79.0,650.0 L83.0,650.0 M79.0,684.6 L83.0,684.6 M79.0,719.2 L83.0,719.2 M79.0,753.8 L83.0,753.8 " stroke="#222" stroke-width="1"/>
<text x="76.4" y="515.9" font-size="10" text-anchor="end" font-weight="400" fill="#000" >1.0E-2</text>
<text x="76.4" y="550.5" font-size="10" text-anchor="end" font-weight="400" fill="#000" >1.0E-3</text>
<text x="76.4" y="585.1" font-size="10" text-anchor="end" font-weight="400" fill="#000" >1.0E-4</text>
<text x="76.4" y="619.7" font-size="10" text-anchor="end" font-weight="400" fill="#000" >1.0E-5</text>
<text x="76.4" y="654.2" font-size="10" text-anchor="end" font-weight="400" fill="#000" >1.0E-6</text>
<text x="76.4" y="688.9" font-size="10" text-anchor="end" font-weight="400" fill="#000" >1.0E-7</text>
<text x="76.4" y="723.5" font-size="10" text-anchor="end" font-weight="400" fill="#000" >1.0E-8</text>
<text x="76.4" y="758.1" font-size="10" text-anchor="end" font-weight="400" fill="#000" >1.0E-9</text>
<clipPath id="c1"><rect x="84.5" y="510.5" width="193.10000000000002" height="243.0"/></clipPath>
<g clip-path="url(#c1)">
<line x1="90.1" y1="556.0" x2="90.1" y2="753.5" stroke="#4060d0" stroke-width="1.2"/>
<line x1="211.0" y1="560.0" x2="211.0" y2="753.5" stroke="#30e030" stroke-width="1.2"/>
<rect x="84.5" y="546.0" width="193.1" height="5.0" fill="#ffff70" />
<circle cx="92" cy="545" r="2.5" fill="#ffff70"/><circle cx="231" cy="538" r="2.5" fill="#ffff70"/><circle cx="236" cy="544" r="2.8" fill="#ffff70"/><path d="M231,538 L231,546" stroke="#ffff70" stroke-width="1.5"/>
<rect x="84.5" y="554.4" width="193.1" height="4.2" fill="#5080f0" />
<g fill="#5080f0"><circle cx="99" cy="559" r="1.8"/><circle cx="105.7" cy="559" r="1.8"/><circle cx="144.5" cy="559" r="1.8"/><circle cx="157.7" cy="554" r="1.8"/><circle cx="178" cy="559" r="1.6"/><circle cx="272" cy="559" r="1.8"/></g>
<rect x="84.5" y="571.5" width="193.1" height="5.0" fill="#50f040" />
<rect x="86.0" y="568.0" width="10.7" height="4.0" fill="#50f040" />
<rect x="110.0" y="568.0" width="12.4" height="4.0" fill="#50f040" />
<rect x="142.7" y="568.0" width="3.6" height="4.0" fill="#50f040" />
<rect x="178.0" y="569.5" width="98.0" height="2.5" fill="#50f040" />
<rect x="84.5" y="718.5" width="193.1" height="6.5" fill="#ff0838" />
<polygon points="85,719 86,707 92,707 92.5,719" fill="#ff0838"/><polygon points="111,719 112,704 114.5,698 117,697 119.5,702 121.7,719" fill="#ff0838"/><polygon points="142,719 142.5,710.5 146,710.5 146.4,719" fill="#ff0838"/><polygon points="84.5,718.5 100,719 100,726 84.5,726" fill="#ff0838"/>
<g fill="#ff0838"><circle cx="89" cy="691.5" r="3"/><circle cx="89" cy="702" r="2.5"/><circle cx="113.8" cy="690" r="2.5"/><circle cx="117" cy="692.5" r="3"/><circle cx="143.7" cy="693" r="2.5"/></g>
<path d="M89,691 L89,710 M114,690 L114,705 M117,692 L117,705 M143.7,693 L143.7,710" stroke="#ff0838" stroke-width="1.5"/>
</g>
<text x="476.5" y="503.6" font-size="10" text-anchor="middle" font-weight="400" fill="#000" >Temperature</text>
<text transform="translate(332.4,631) rotate(-90)" font-size="10.2" text-anchor="middle">Temperature (K)</text>
<path d="M360.0,754.5 L360.0,759.5 M407.3,754.5 L407.3,759.5 M454.6,754.5 L454.6,759.5 M502.0,754.5 L502.0,759.5 M549.3,754.5 L549.3,759.5 M567.8,754.5 L567.8,759.5 " stroke="#222" stroke-width="1"/>
<text x="360.0" y="770.7" font-size="10.3" text-anchor="middle" font-weight="400" fill="#000" >00:00</text>
<text x="407.3" y="770.7" font-size="10.3" text-anchor="middle" font-weight="400" fill="#000" >02:00</text>
<text x="454.6" y="770.7" font-size="10.3" text-anchor="middle" font-weight="400" fill="#000" >04:00</text>
<text x="502.0" y="770.7" font-size="10.3" text-anchor="middle" font-weight="400" fill="#000" >06:00</text>
<text x="567.8" y="770.7" font-size="10.3" text-anchor="middle" font-weight="400" fill="#000" >08:47</text>
<text x="456.3" y="784.5" font-size="10" text-anchor="middle" font-weight="400" fill="#000" >Time</text>
<rect x="360.0" y="510.8" width="207.8" height="242.2" fill="#000" />
<path d="M366.0,510.8 L366.0,753 M372.0,510.8 L372.0,753 M378.0,510.8 L378.0,753 M384.0,510.8 L384.0,753 M390.0,510.8 L390.0,753 M395.0,510.8 L395.0,753 M401.0,510.8 L401.0,753 M413.0,510.8 L413.0,753 M419.0,510.8 L419.0,753 M425.0,510.8 L425.0,753 M431.0,510.8 L431.0,753 M437.0,510.8 L437.0,753 M443.0,510.8 L443.0,753 M449.0,510.8 L449.0,753 M461.0,510.8 L461.0,753 M466.0,510.8 L466.0,753 M472.0,510.8 L472.0,753 M478.0,510.8 L478.0,753 M484.0,510.8 L484.0,753 M490.0,510.8 L490.0,753 M496.0,510.8 L496.0,753 M508.0,510.8 L508.0,753 M514.0,510.8 L514.0,753 M520.0,510.8 L520.0,753 M526.0,510.8 L526.0,753 M532.0,510.8 L532.0,753 M537.0,510.8 L537.0,753 M543.0,510.8 L543.0,753 M555.0,510.8 L555.0,753 M561.0,510.8 L561.0,753 M567.0,510.8 L567.0,753 M360,518.0 L567.8,518.0 M360,525.0 L567.8,525.0 M360,532.0 L567.8,532.0 M360,539.0 L567.8,539.0 M360,553.0 L567.8,553.0 M360,560.0 L567.8,560.0 M360,567.0 L567.8,567.0 M360,573.0 L567.8,573.0 M360,587.0 L567.8,587.0 M360,594.0 L567.8,594.0 M360,601.0 L567.8,601.0 M360,608.0 L567.8,608.0 M360,622.0 L567.8,622.0 M360,629.0 L567.8,629.0 M360,635.0 L567.8,635.0 M360,642.0 L567.8,642.0 M360,656.0 L567.8,656.0 M360,663.0 L567.8,663.0 M360,670.0 L567.8,670.0 M360,677.0 L567.8,677.0 M360,691.0 L567.8,691.0 M360,697.0 L567.8,697.0 M360,704.0 L567.8,704.0 M360,711.0 L567.8,711.0 M360,725.0 L567.8,725.0 M360,732.0 L567.8,732.0 M360,739.0 L567.8,739.0 M360,746.0 L567.8,746.0 " stroke="#484600" stroke-width="1.5"/>
<path d="M407.0,510.8 L407.0,753 M455.0,510.8 L455.0,753 M502.0,510.8 L502.0,753 M549.0,510.8 L549.0,753 M360,546.0 L567.8,546.0 M360,580.0 L567.8,580.0 M360,615.0 L567.8,615.0 M360,649.0 L567.8,649.0 M360,684.0 L567.8,684.0 M360,718.0 L567.8,718.0 " stroke="#8e8c00" stroke-width="1.8"/>
<path d="M354.5,511.4 L358.5,511.4 M354.5,545.9 L358.5,545.9 M354.5,580.3 L358.5,580.3 M354.5,614.8 L358.5,614.8 M354.5,649.2 L358.5,649.2 M354.5,683.7 L358.5,683.7 M354.5,718.2 L358.5,718.2 M354.5,752.6 L358.5,752.6 " stroke="#222" stroke-width="1"/>
<text x="351.8" y="515.6" font-size="10" text-anchor="end" font-weight="400" fill="#000" >6.4</text>
<text x="351.8" y="550.1" font-size="10" text-anchor="end" font-weight="400" fill="#000" >6.3</text>
<text x="351.8" y="584.6" font-size="10" text-anchor="end" font-weight="400" fill="#000" >6.2</text>
<text x="351.8" y="619.0" font-size="10" text-anchor="end" font-weight="400" fill="#000" >6.1</text>
<text x="351.8" y="653.5" font-size="10" text-anchor="end" font-weight="400" fill="#000" >6.0</text>
<text x="351.8" y="688.0" font-size="10" text-anchor="end" font-weight="400" fill="#000" >5.9</text>
<text x="351.8" y="722.4" font-size="10" text-anchor="end" font-weight="400" fill="#000" >5.8</text>
<text x="351.8" y="756.9" font-size="10" text-anchor="end" font-weight="400" fill="#000" >5.7</text>
<clipPath id="c2"><rect x="360" y="510.8" width="207.79999999999995" height="242.2"/></clipPath>
<g clip-path="url(#c2)">
<path d="M361.5,570.8V608.1M363.5,571.1V604.8M365.5,565.9V601.1M367.5,569.2V605.2M369.5,568.7V600.3M371.5,571.5V596.2M373.5,570.0V596.6M375.5,566.4V593.4M377.5,567.6V598.7M379.5,567.0V595.9M381.5,566.3V604.6M383.5,566.3V597.9M385.5,559.4V602.1M387.5,563.9V599.9M389.5,565.4V598.5M391.5,568.0V599.6M393.5,567.3V606.5M395.5,566.4V603.3M397.5,567.0V605.4M399.5,567.6V604.8M401.5,568.6V602.9M403.5,569.3V610.9M405.5,569.1V605.3M407.5,569.8V606.1M409.5,569.0V598.8M411.5,565.3V596.8M413.5,569.0V595.5M415.5,568.7V599.6M417.5,568.0V605.8M419.5,572.6V597.9M421.5,571.8V600.3M423.5,569.5V599.6M425.5,568.5V609.9M427.5,569.5V600.1M429.5,567.8V599.7M431.5,564.6V604.6M433.5,568.2V595.8M435.5,566.9V594.5M437.5,567.9V595.2M439.5,568.3V593.6M441.5,566.9V595.4M443.5,566.6V594.7M445.5,565.3V598.0M447.5,548.9V597.4M449.5,544.1V606.0M451.5,554.6V598.5M453.5,566.3V594.6M455.5,567.8V591.3M457.5,565.6V591.8M459.5,566.0V595.2M461.5,567.9V595.0M463.5,568.6V595.4M465.5,566.8V596.6M467.5,563.5V591.7M469.5,560.7V589.6M471.5,557.9V595.5M473.5,558.1V591.8M475.5,553.6V592.1M477.5,557.5V602.3M479.5,554.0V602.2M481.5,556.1V600.3M483.5,556.6V594.7M485.5,569.5V595.6M487.5,564.6V594.9M489.5,565.7V600.1M491.5,568.3V597.2M493.5,564.6V595.2M495.5,561.9V605.5M497.5,557.2V607.0M499.5,552.1V604.2M501.5,550.9V602.4M503.5,557.8V602.6M505.5,555.5V606.6M507.5,555.9V599.3M509.5,556.3V594.9M511.5,561.0V592.4M513.5,563.9V591.9M515.5,563.8V593.8M517.5,561.9V593.4M519.5,565.1V597.4M521.5,568.2V597.3M523.5,568.2V604.5M525.5,567.8V592.5M527.5,567.6V593.6M529.5,568.0V592.6M531.5,566.3V599.1M533.5,566.9V587.4M535.5,567.9V587.8M537.5,567.2V596.2M539.5,565.9V595.2M541.5,563.9V597.3M543.5,563.2V595.9M545.5,562.4V598.6M547.5,557.0V599.5M549.5,553.3V600.1M551.5,547.6V599.9M553.5,555.6V595.2M555.5,562.1V597.3M557.5,562.7V597.7M559.5,561.2V599.2M561.5,559.1V598.3M563.5,565.7V596.9M565.5,566.5V599.3" stroke="#00f8c8" stroke-width="4" stroke-linecap="round" fill="none"/>
<g fill="#00f8c8"><circle cx="377.5" cy="600.9" r="2.6"/><circle cx="413.5" cy="603.9" r="2.6"/><circle cx="423.5" cy="607.8" r="2.6"/><circle cx="427.5" cy="606.4" r="2.6"/><circle cx="455.5" cy="598.9" r="2.6"/><circle cx="459.5" cy="601.3" r="2.6"/><circle cx="467.5" cy="598.1" r="2.6"/><circle cx="523.5" cy="606.1" r="2.6"/><circle cx="543.5" cy="608.9" r="2.6"/><circle cx="561.5" cy="604.0" r="2.6"/><circle cx="563.5" cy="604.1" r="2.6"/></g>
<path d="M361.5,694.5V748.1M363.5,695.3V740.3M365.5,692.9V732.6M367.5,692.4V731.5M369.5,692.8V731.2M371.5,694.0V733.9M373.5,695.0V733.0M375.5,695.3V730.5M377.5,694.5V726.0M379.5,690.4V727.7M381.5,688.4V727.5M383.5,687.6V735.3M385.5,685.6V738.1M387.5,688.9V735.6M389.5,687.6V732.1M391.5,682.6V728.0M393.5,686.1V732.0M395.5,688.2V737.4M397.5,685.9V744.1M399.5,689.0V739.5M401.5,690.7V735.0M403.5,693.5V734.2M405.5,693.3V736.7M407.5,693.1V738.1M409.5,691.1V735.7M411.5,689.5V733.6M413.5,693.8V731.6M415.5,693.0V738.4M417.5,692.8V729.1M419.5,694.3V732.4M421.5,694.2V730.2M423.5,692.3V733.0M425.5,694.6V733.8M427.5,695.7V729.5M429.5,692.7V727.0M431.5,690.0V727.6M433.5,686.0V726.0M435.5,691.0V732.8M437.5,690.1V727.2M439.5,692.9V727.9M441.5,692.0V733.7M443.5,689.3V732.1M445.5,686.3V734.3M447.5,660.2V737.1M449.5,663.9V740.2M451.5,671.2V734.9M453.5,687.6V730.2M455.5,688.8V727.2M457.5,690.5V722.8M459.5,689.5V732.5M461.5,692.3V724.8M463.5,694.3V721.9M465.5,691.9V719.4M467.5,688.7V721.3M469.5,684.9V722.3M471.5,684.9V719.8M473.5,680.1V720.6M475.5,679.6V727.1M477.5,679.2V726.2M479.5,680.0V743.6M481.5,676.9V742.9M483.5,683.0V725.4M485.5,691.3V726.3M487.5,693.9V727.0M489.5,695.9V730.2M491.5,694.8V732.2M493.5,689.8V732.3M495.5,685.6V738.2M497.5,675.1V745.0M499.5,668.3V739.8M501.5,665.0V739.0M503.5,676.0V735.0M505.5,676.8V734.2M507.5,677.9V732.1M509.5,680.0V728.4M511.5,676.8V725.7M513.5,683.8V726.6M515.5,685.8V728.3M517.5,685.9V729.3M519.5,688.8V730.5M521.5,691.8V740.4M523.5,689.3V737.1M525.5,693.5V727.1M527.5,693.2V727.1M529.5,692.8V724.2M531.5,691.0V731.3M533.5,691.6V725.1M535.5,686.8V723.7M537.5,686.7V729.3M539.5,688.2V728.6M541.5,687.1V730.5M543.5,687.1V735.1M545.5,684.9V734.5M547.5,680.3V731.1M549.5,671.0V736.7M551.5,668.9V729.5M553.5,671.7V729.7M555.5,679.5V738.8M557.5,680.4V733.0M559.5,680.4V730.8M561.5,684.8V732.3M563.5,692.4V732.4M565.5,687.8V732.2" stroke="#ff0038" stroke-width="4" stroke-linecap="round" fill="none"/>
<g fill="#ff0038"><circle cx="369.5" cy="740.0" r="2.6"/><circle cx="391.5" cy="738.1" r="2.6"/><circle cx="397.5" cy="750.4" r="2.6"/><circle cx="401.5" cy="740.3" r="2.6"/><circle cx="435.5" cy="736.3" r="2.6"/><circle cx="441.5" cy="738.8" r="2.6"/><circle cx="447.5" cy="744.7" r="2.6"/><circle cx="457.5" cy="733.0" r="2.6"/><circle cx="467.5" cy="726.2" r="2.6"/><circle cx="475.5" cy="729.0" r="2.6"/><circle cx="493.5" cy="738.8" r="2.6"/><circle cx="549.5" cy="740.8" r="2.6"/><circle cx="557.5" cy="737.2" r="2.6"/></g>
</g>
<text x="766.0" y="503.6" font-size="10" text-anchor="middle" font-weight="400" fill="#000" >Gamma Count</text>
<text transform="translate(622.2,633.7) rotate(-90)" font-size="10.3" text-anchor="middle">Counts/sec</text>
<path d="M664.2,760.7 L664.2,765.7 M709.4,760.7 L709.4,765.7 M754.6,760.7 L754.6,765.7 M799.8,760.7 L799.8,765.7 M845.0,760.7 L845.0,765.7 M862.7,760.7 L862.7,765.7 " stroke="#222" stroke-width="1"/>
<text x="664.2" y="776.2" font-size="10.3" text-anchor="middle" font-weight="400" fill="#000" >00:00</text>
<text x="709.4" y="776.2" font-size="10.3" text-anchor="middle" font-weight="400" fill="#000" >02:00</text>
<text x="754.6" y="776.2" font-size="10.3" text-anchor="middle" font-weight="400" fill="#000" >04:00</text>
<text x="799.8" y="776.2" font-size="10.3" text-anchor="middle" font-weight="400" fill="#000" >06:00</text>
<text x="862.7" y="776.2" font-size="10.3" text-anchor="middle" font-weight="400" fill="#000" >08:47</text>
<text x="763.8" y="790.0" font-size="10" text-anchor="middle" font-weight="400" fill="#000" >Time</text>
<rect x="664.2" y="511.5" width="198.5" height="247.7" fill="#000" />
<path d="M670.0,511.5 L670.0,759.2 M675.0,511.5 L675.0,759.2 M681.0,511.5 L681.0,759.2 M687.0,511.5 L687.0,759.2 M692.0,511.5 L692.0,759.2 M698.0,511.5 L698.0,759.2 M704.0,511.5 L704.0,759.2 M715.0,511.5 L715.0,759.2 M721.0,511.5 L721.0,759.2 M726.0,511.5 L726.0,759.2 M732.0,511.5 L732.0,759.2 M738.0,511.5 L738.0,759.2 M743.0,511.5 L743.0,759.2 M749.0,511.5 L749.0,759.2 M760.0,511.5 L760.0,759.2 M766.0,511.5 L766.0,759.2 M772.0,511.5 L772.0,759.2 M777.0,511.5 L777.0,759.2 M783.0,511.5 L783.0,759.2 M788.0,511.5 L788.0,759.2 M794.0,511.5 L794.0,759.2 M805.0,511.5 L805.0,759.2 M811.0,511.5 L811.0,759.2 M817.0,511.5 L817.0,759.2 M822.0,511.5 L822.0,759.2 M828.0,511.5 L828.0,759.2 M834.0,511.5 L834.0,759.2 M839.0,511.5 L839.0,759.2 M851.0,511.5 L851.0,759.2 M856.0,511.5 L856.0,759.2 M862.0,511.5 L862.0,759.2 M664.2,516.0 L862.7,516.0 M664.2,521.0 L862.7,521.0 M664.2,525.0 L862.7,525.0 M664.2,530.0 L862.7,530.0 M664.2,539.0 L862.7,539.0 M664.2,543.0 L862.7,543.0 M664.2,548.0 L862.7,548.0 M664.2,552.0 L862.7,552.0 M664.2,561.0 L862.7,561.0 M664.2,566.0 L862.7,566.0 M664.2,570.0 L862.7,570.0 M664.2,575.0 L862.7,575.0 M664.2,584.0 L862.7,584.0 M664.2,588.0 L862.7,588.0 M664.2,593.0 L862.7,593.0 M664.2,597.0 L862.7,597.0 M664.2,606.0 L862.7,606.0 M664.2,611.0 L862.7,611.0 M664.2,615.0 L862.7,615.0 M664.2,620.0 L862.7,620.0 M664.2,629.0 L862.7,629.0 M664.2,633.0 L862.7,633.0 M664.2,638.0 L862.7,638.0 M664.2,642.0 L862.7,642.0 M664.2,651.0 L862.7,651.0 M664.2,656.0 L862.7,656.0 M664.2,660.0 L862.7,660.0 M664.2,665.0 L862.7,665.0 M664.2,674.0 L862.7,674.0 M664.2,678.0 L862.7,678.0 M664.2,683.0 L862.7,683.0 M664.2,687.0 L862.7,687.0 M664.2,696.0 L862.7,696.0 M664.2,701.0 L862.7,701.0 M664.2,705.0 L862.7,705.0 M664.2,710.0 L862.7,710.0 M664.2,719.0 L862.7,719.0 M664.2,723.0 L862.7,723.0 M664.2,728.0 L862.7,728.0 M664.2,732.0 L862.7,732.0 M664.2,741.0 L862.7,741.0 M664.2,746.0 L862.7,746.0 M664.2,750.0 L862.7,750.0 M664.2,755.0 L862.7,755.0 " stroke="#484600" stroke-width="1.5"/>
<path d="M709.0,511.5 L709.0,759.2 M755.0,511.5 L755.0,759.2 M800.0,511.5 L800.0,759.2 M845.0,511.5 L845.0,759.2 M664.2,534.0 L862.7,534.0 M664.2,557.0 L862.7,557.0 M664.2,579.0 L862.7,579.0 M664.2,602.0 L862.7,602.0 M664.2,624.0 L862.7,624.0 M664.2,647.0 L862.7,647.0 M664.2,669.0 L862.7,669.0 M664.2,692.0 L862.7,692.0 M664.2,714.0 L862.7,714.0 M664.2,737.0 L862.7,737.0 " stroke="#8e8c00" stroke-width="1.8"/>
<path d="M658.7,511.5 L662.7,511.5 M658.7,534.0 L662.7,534.0 M658.7,556.5 L662.7,556.5 M658.7,579.1 L662.7,579.1 M658.7,601.6 L662.7,601.6 M658.7,624.1 L662.7,624.1 M658.7,646.6 L662.7,646.6 M658.7,669.1 L662.7,669.1 M658.7,691.6 L662.7,691.6 M658.7,714.2 L662.7,714.2 M658.7,736.7 L662.7,736.7 M658.7,759.2 L662.7,759.2 " stroke="#222" stroke-width="1"/>
<text x="655.6" y="515.8" font-size="10" text-anchor="end" font-weight="400" fill="#000" >55000</text>
<text x="655.6" y="538.3" font-size="10" text-anchor="end" font-weight="400" fill="#000" >50000</text>
<text x="655.6" y="560.8" font-size="10" text-anchor="end" font-weight="400" fill="#000" >45000</text>
<text x="655.6" y="583.3" font-size="10" text-anchor="end" font-weight="400" fill="#000" >40000</text>
<text x="655.6" y="605.8" font-size="10" text-anchor="end" font-weight="400" fill="#000" >35000</text>
<text x="655.6" y="628.3" font-size="10" text-anchor="end" font-weight="400" fill="#000" >30000</text>
<text x="655.6" y="650.9" font-size="10" text-anchor="end" font-weight="400" fill="#000" >25000</text>
<text x="655.6" y="673.4" font-size="10" text-anchor="end" font-weight="400" fill="#000" >20000</text>
<text x="655.6" y="695.9" font-size="10" text-anchor="end" font-weight="400" fill="#000" >15000</text>
<text x="655.6" y="718.4" font-size="10" text-anchor="end" font-weight="400" fill="#000" >10000</text>
<text x="655.6" y="740.9" font-size="10" text-anchor="end" font-weight="400" fill="#000" >5000</text>
<text x="655.6" y="763.5" font-size="10" text-anchor="end" font-weight="400" fill="#000" >0</text>
<rect x="664.0" y="523.0" width="2.0" height="236.2" fill="#ff0838" />
<circle cx="666" cy="524" r="2.5" fill="#ff0838"/>
<rect x="664.2" y="755.5" width="198.5" height="3.7" fill="#ff0838" />
<polygon points="10,804.5 61,804.5 59,806.5 12,806.5 12,826 10,828" fill="#c8c8c8"/>
<polygon points="61,804.5 61,828 10,828 12,826 59,826 59,806.5" fill="#e8e8e8"/>
<rect x="12.0" y="806.5" width="47.0" height="19.5" fill="#d8d8d8" />
<text x="13.5" y="821.6" font-size="13" text-anchor="start" font-weight="400" fill="#000" >4531</text>
<text x="63.0" y="814.2" font-size="10" text-anchor="start" font-weight="400" fill="#000" >Cycle time [ms]</text>
<linearGradient id="gb" x1="0" y1="0" x2="0" y2="1"><stop offset="0" stop-color="#5a8a40"/><stop offset="0.4" stop-color="#2a5a18"/><stop offset="1" stop-color="#1a3a0c"/></linearGradient>
<rect x="64.0" y="820.0" width="68.0" height="8.0" fill="url(#gb)" />
<linearGradient id="gs" x1="0" y1="0" x2="0" y2="1"><stop offset="0" stop-color="#d8d8d8"/><stop offset="1" stop-color="#b4b4b4"/></linearGradient>
<linearGradient id="gsr" x1="0" y1="0" x2="1" y2="0"><stop offset="0" stop-color="#000" stop-opacity="0"/><stop offset="1" stop-color="#000" stop-opacity="0.35"/></linearGradient>
<rect x="170.7" y="802.4" width="190.9" height="27.6" fill="#5a5a5a" />
<rect x="172.0" y="803.5" width="188.0" height="26.5" fill="url(#gs)" />
<rect x="172.0" y="803.5" width="3.0" height="26.5" fill="#e6e6e6" />
<rect x="172.0" y="803.5" width="188.0" height="1.5" fill="#e6e6e6" />
<rect x="352.0" y="805.0" width="8.0" height="25.0" fill="url(#gsr)" />
<text x="265.4" y="824.6" font-size="18.7" text-anchor="middle" font-weight="700" fill="#ff0000" >STOP PROGRAM</text>
<rect x="399.5" y="799.5" width="219.0" height="30.5" fill="#b09a80" />
<rect x="401.7" y="801.7" width="215.3" height="28.3" fill="#80fc70" />
<text x="508.0" y="823.7" font-size="20.3" text-anchor="middle" font-weight="400" fill="#102010" >System OK</text>
<text x="655.4" y="820.6" font-size="10.2" text-anchor="start" font-weight="400" fill="#000" >Last moderator grown</text>
<polygon points="759.5,807.3 880,807.3 878.5,808.8 761.0,808.8 761.0,824.5 759.5,826" fill="#a8a8a8"/>
<polygon points="880,807.3 880,826 759.5,826 761.0,824.5 878.5,824.5 878.5,808.8" fill="#f0f0f0"/>
<rect x="761.0" y="808.8" width="117.5" height="15.7" fill="#dadada" />
<text x="763.5" y="820.4" font-size="10.2" text-anchor="start" font-weight="400" fill="#000" >Fri 21 Oct 2022 17:07</text>
<rect x="0.0" y="828.0" width="888.0" height="9.0" fill="#e2dfd8" />
<pattern id="chk" width="2" height="2" patternUnits="userSpaceOnUse"><rect width="2" height="2" fill="#f0eee8"/><rect width="1" height="1" fill="#d8d4cc"/><rect x="1" y="1" width="1" height="1" fill="#d8d4cc"/></pattern>
<rect x="172.0" y="828.0" width="238.0" height="9.0" fill="url(#chk)" />
<rect x="0.0" y="828.0" width="157.0" height="9.0" fill="#f4f4f0" stroke="#222" stroke-width="1" />
<text x="0.0" y="838.1" font-size="10.1" text-anchor="start" font-weight="400" fill="#000" >emLineControl.lvproj/My Computer</text>
<rect x="157.0" y="828.0" width="15.0" height="9.0" fill="#dcdcd8" stroke="#555" stroke-width="1" />
<path d="M163,833 L167,830 L167,836 Z" fill="#111"/>
<path d="M138.5,9.5 L138.5,3 L139.5,2 L141.5,2 L142.5,3 L142.5,7.5 L146,7.5 L148.5,9 L149,12 L147.5,16.5 L141,17 L138,13 L134.5,9.5 L135,8 L136.5,7.5 Z" fill="#fff" stroke="#000" stroke-width="1.1" stroke-linejoin="round"/>
</svg></body></html>
